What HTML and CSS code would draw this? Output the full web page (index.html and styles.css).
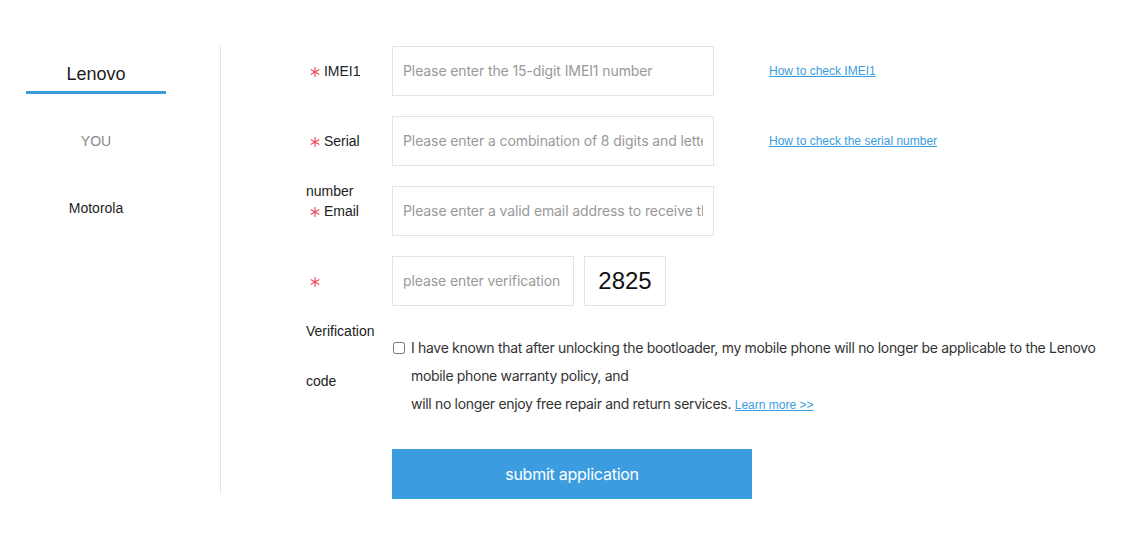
FILE: index.html
```html
<!DOCTYPE html>
<html lang="en">
<head>
<meta charset="utf-8">
<title>Unlock application</title>
<link rel="stylesheet" href="styles.css">
</head>
<body>
<div class="page">
  <aside class="sidebar">
    <div class="tab tab-active">Lenovo</div>
    <div class="tab tab-you">YOU</div>
    <div class="tab tab-moto">Motorola</div>
  </aside>
  <main class="main">
    <div class="row">
      <label class="label"><svg class="req" viewBox="0 0 10 10" aria-hidden="true"><path d="M5 0V10M0.7 2.5L9.3 7.5M0.7 7.5L9.3 2.5"/></svg> IMEI1</label>
      <input class="input" type="text" placeholder="Please enter the 15-digit IMEI1 number">
      <a class="help" href="#">How to check IMEI1</a>
    </div>
    <div class="row">
      <label class="label"><svg class="req" viewBox="0 0 10 10" aria-hidden="true"><path d="M5 0V10M0.7 2.5L9.3 7.5M0.7 7.5L9.3 2.5"/></svg> Serial number</label>
      <input class="input" type="text" placeholder="Please enter a combination of 8 digits and letters">
      <a class="help" href="#">How to check the serial number</a>
    </div>
    <div class="row">
      <label class="label"><svg class="req" viewBox="0 0 10 10" aria-hidden="true"><path d="M5 0V10M0.7 2.5L9.3 7.5M0.7 7.5L9.3 2.5"/></svg> Email</label>
      <input class="input" type="text" placeholder="Please enter a valid email address to receive the unlock code">
    </div>
    <div class="row">
      <label class="label"><svg class="req" viewBox="0 0 10 10" aria-hidden="true"><path d="M5 0V10M0.7 2.5L9.3 7.5M0.7 7.5L9.3 2.5"/></svg> Verification code</label>
      <input class="input input-code" type="text" placeholder="please enter verification code">
      <div class="captcha">2825</div>
    </div>
    <div class="agree">
      <div class="check-col"><input class="check" type="checkbox"></div>
      <div class="agree-text">I have known that after unlocking the bootloader, my mobile phone will no longer be applicable to the Lenovo mobile phone warranty policy, and<br>will no longer enjoy free repair and return services. <a class="more" href="#">Learn more &gt;&gt;</a></div>
    </div>
    <button class="submit" type="button">submit application</button>
  </main>
</div>
</body>
</html>
```

FILE: styles.css
```css
* { box-sizing: border-box; }
html, body { margin: 0; padding: 0; background: #fff; }
body {
  font-family: "Liberation Sans", Arial, sans-serif;
  color: #222;
}
.page {
  display: flex;
  margin-top: 45px;
}
.sidebar {
  width: 221px;
  height: 449px;
  border-right: 1px solid #e3e3e3;
  padding-left: 26px;
}
.tab {
  width: 140px;
  text-align: center;
  font-size: 14px;
  line-height: 20px;
}
.tab-active {
  font-size: 18px;
  line-height: 26px;
  padding-top: 16px;
  height: 49px;
  border-bottom: 3px solid #3b9ade;
  color: #1d1d1d;
}
.tab-you {
  margin-top: 37px;
  color: #8a8a8a;
}
.tab-moto {
  margin-top: 47px;
  color: #1d1d1d;
}
.main {
  padding-left: 85px;
  padding-top: 1px;
}
.row {
  display: flex;
  align-items: flex-start;
  height: 50px;
  margin-bottom: 20px;
}
.label {
  width: 86px;
  flex: none;
  font-size: 14px;
  line-height: 50px;
  color: #222;
}
.req {
  display: inline-block;
  width: 10px;
  height: 10px;
  margin-left: 4px;
  vertical-align: -0.5px;
  stroke: #ec4a5a;
  stroke-width: 1.1;
  fill: none;
}
.input {
  width: 322px;
  height: 50px;
  flex: none;
  margin: 0;
  border: 1px solid #e3e3e3;
  padding: 0 10px 1px;
  font-family: Inter, "Noto Sans", sans-serif;
  font-size: 14px;
  letter-spacing: -0.1px;
  color: #333;
  outline: none;
  border-radius: 0;
}
.input::placeholder { color: #999; }
.input-code { width: 182px; }
.help {
  margin-left: 55px;
  font-size: 12px;
  line-height: 50px;
  color: #3a9de0;
  text-decoration: underline;
}
.captcha {
  width: 82px;
  height: 50px;
  margin-left: 10px;
  border: 1px solid #e3e3e3;
  font-size: 24px;
  line-height: 48px;
  text-align: center;
  color: #111;
}
.agree {
  display: flex;
  margin-top: 28px;
  margin-left: 86px;
  width: 712px;
}
.check-col {
  width: 19px;
  flex: none;
  padding-top: 8px;
}
.check {
  width: 12px;
  height: 12px;
  margin: 0 0 0 1px;
  display: block;
}
.agree-text {
  font-family: Inter, "Noto Sans", sans-serif;
  font-size: 14px;
  letter-spacing: -0.32px;
  line-height: 28px;
  color: #333;
}
.more {
  font-family: "Liberation Sans", Arial, sans-serif;
  font-size: 12px;
  letter-spacing: 0;
  color: #3a9de0;
  text-decoration: underline;
}
.submit {
  display: block;
  margin: 30px 0 0 86px;
  width: 360px;
  height: 50px;
  border: 0;
  background: #3b9de0;
  color: #fff;
  font-family: Inter, "Noto Sans", sans-serif;
  font-size: 16px;
  letter-spacing: -0.25px;
  cursor: pointer;
  padding: 0;
}
```
